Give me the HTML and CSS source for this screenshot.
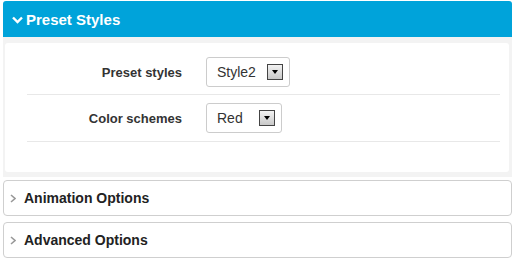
FILE: index.html
```html
<!DOCTYPE html>
<html lang="en">
<head>
  <meta charset="UTF-8">
  <title>Preset Styles</title>
  <link rel="stylesheet" href="styles.css">
</head>
<body>
  <div class="page">

    <!-- open section -->
    <div class="panel">
      <div class="panel-head open">
        <svg class="chev" width="11" height="8" viewBox="0 0 11 8"><path d="M1 1.5 L5.5 6 L10 1.5" fill="none" stroke="#fff" stroke-width="2.4"/></svg>
        <span>Preset Styles</span>
      </div>
      <div class="panel-body">
        <div class="card">
          <div class="row">
            <label>Preset styles</label>
            <div class="select wide">
              <span>Style2</span>
              <span class="drop"><i></i></span>
            </div>
          </div>
          <div class="row">
            <label>Color schemes</label>
            <div class="select">
              <span>Red</span>
              <span class="drop"><i></i></span>
            </div>
          </div>
        </div>
      </div>
    </div>

    <!-- closed sections -->
    <div class="section">
      <svg class="arrow" width="6" height="9" viewBox="0 0 6 9"><path d="M1 1 L5 4.5 L1 8" fill="none" stroke="#999" stroke-width="1.6"/></svg>
      <span>Animation Options</span>
    </div>
    <div class="section">
      <svg class="arrow" width="6" height="9" viewBox="0 0 6 9"><path d="M1 1 L5 4.5 L1 8" fill="none" stroke="#999" stroke-width="1.6"/></svg>
      <span>Advanced Options</span>
    </div>

  </div>
</body>
</html>
```

FILE: styles.css
```css
* {
  box-sizing: border-box;
}

body {
  margin: 0;
  background: #fff;
  font-family: "Liberation Sans", Arial, sans-serif;
  color: #333;
}

.page {
  padding: 1px 5px 0 3px;
}

.panel-head {
  height: 36px;
  background: #00a3da;
  border-radius: 3px 3px 0 0;
  display: flex;
  align-items: center;
  padding-left: 9px;
  color: #fff;
  font-weight: 700;
  font-size: 15px;
}

.panel-head .chev {
  margin-right: 3px;
  margin-top: 1px;
}

.panel-body {
  background: #f3f3f3;
  padding: 6px 3px 5px 2px;
}

.card {
  background: #fff;
  border-radius: 3px;
  padding: 6px 9px 30px 22px;
}

.row {
  display: flex;
  align-items: center;
  padding: 8px 0 7px;
  border-bottom: 1px solid #e8e8e8;
}

.row + .row {
  padding-bottom: 8px;
}

.row label {
  width: 155px;
  text-align: right;
  font-weight: 700;
  font-size: 13px;
  color: #333;
  margin-right: 24px;
}

.select {
  width: 76px;
  height: 30px;
  border: 1px solid #ccc;
  border-radius: 3px;
  display: flex;
  align-items: center;
  justify-content: space-between;
  padding: 0 6px 0 10px;
  font-size: 14px;
  color: #333;
}

.select.wide {
  width: 84px;
}

.drop {
  width: 16px;
  height: 16px;
  border: 1px solid #444;
  background: linear-gradient(#f2f2f2, #c8c8c8);
  display: flex;
  align-items: center;
  justify-content: center;
}

.drop i {
  width: 0;
  height: 0;
  border-left: 3.5px solid transparent;
  border-right: 3.5px solid transparent;
  border-top: 4px solid #000;
}

.section {
  height: 36px;
  margin-top: 6px;
  border: 1px solid #cfcfcf;
  border-radius: 4px;
  display: flex;
  align-items: center;
  padding-left: 6px;
  font-weight: 700;
  font-size: 14px;
  color: #222;
}

.page .panel + .section {
  margin-top: 3px;
}

.section .arrow {
  margin-right: 8px;
}
```
